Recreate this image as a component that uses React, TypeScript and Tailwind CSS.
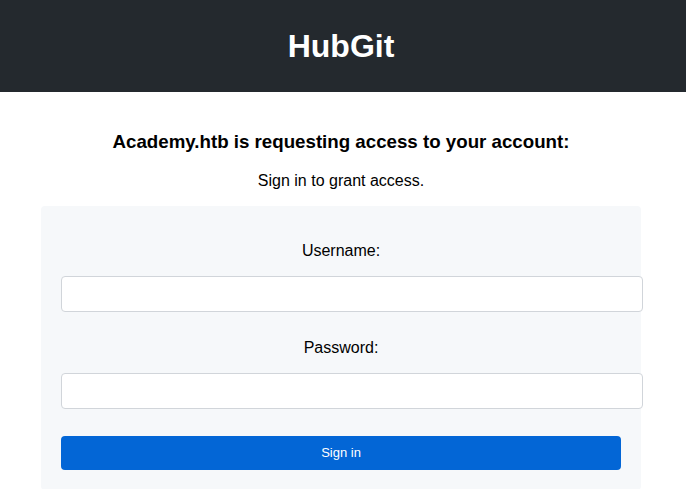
import React from 'react';

const App = () => {
  return (
    <div className="min-h-[489px] bg-white font-['Liberation_Sans',Arial,sans-serif] text-black">
      <header className="flex h-[92px] w-full justify-start bg-[#24292e]">
        <div className="flex w-[682px] items-center justify-center">
          <h1 className="text-[32px] font-bold leading-[38px] text-white">HubGit</h1>
        </div>
      </header>

      <div className="flex w-[682px] flex-col items-center">
        <h2 className="mt-[39px] text-[18.72px] font-bold leading-[22px]">
          Academy.htb is requesting access to your account:
        </h2>
        <p className="mt-[18px] text-[16px] leading-[20px]">Sign in to grant access.</p>

        <form className="mt-[15px] flex w-[600px] flex-col rounded bg-[#f6f8fa] px-5 pt-[34px] pb-5">
          <label className="text-center text-[16px] leading-[22px]">Username:</label>
          <input
            type="text"
            className="mt-[14px] box-content h-[34px] w-full rounded border border-[#d1d5da] bg-white px-[10px] outline-none"
          />
          <label className="mt-[25px] text-center text-[16px] leading-[22px]">Password:</label>
          <input
            type="password"
            className="mt-[14px] box-content h-[34px] w-full rounded border border-[#d1d5da] bg-white px-[10px] outline-none"
          />
          <button
            type="button"
            className="mt-[27px] h-[34px] w-full rounded bg-[#0366d6] text-[13px] text-white"
          >
            Sign in
          </button>
        </form>
      </div>
    </div>
  );
};

export default App;
